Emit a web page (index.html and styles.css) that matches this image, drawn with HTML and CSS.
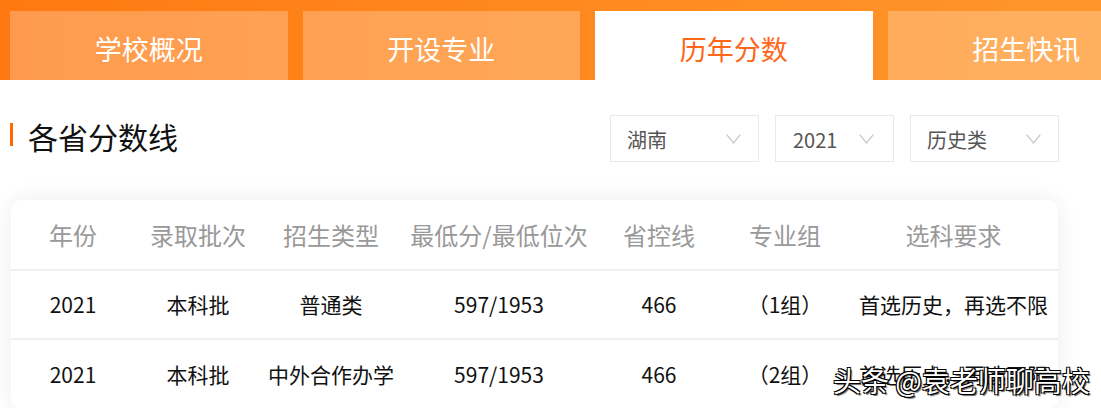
FILE: index.html
```html
<!DOCTYPE html>
<html lang="zh-CN">
<head>
<meta charset="utf-8">
<title>历年分数</title>
<link rel="stylesheet" href="styles.css">
</head>
<body>
<div class="page">
  <nav class="tabs">
    <div class="tab">学校概况</div>
    <div class="tab">开设专业</div>
    <div class="tab active">历年分数</div>
    <div class="tab">招生快讯</div>
  </nav>

  <section class="toolbar">
    <h2 class="title"><span class="bar"></span><span class="title-text">各省分数线</span></h2>
    <div class="filters">
      <div class="select wide"><span>湖南</span><svg class="chev" width="15" height="10" viewBox="0 0 15 10"><polyline points="0.7,0.7 7.5,9 14.3,0.7" fill="none" stroke="#c6c6c6" stroke-width="1.2"/></svg></div>
      <div class="select narrow"><span>2021</span><svg class="chev" width="15" height="10" viewBox="0 0 15 10"><polyline points="0.7,0.7 7.5,9 14.3,0.7" fill="none" stroke="#c6c6c6" stroke-width="1.2"/></svg></div>
      <div class="select wide"><span>历史类</span><svg class="chev" width="15" height="10" viewBox="0 0 15 10"><polyline points="0.7,0.7 7.5,9 14.3,0.7" fill="none" stroke="#c6c6c6" stroke-width="1.2"/></svg></div>
    </div>
  </section>

  <div class="card">
    <div class="row head">
      <div>年份</div><div>录取批次</div><div>招生类型</div><div>最低分/最低位次</div><div>省控线</div><div>专业组</div><div>选科要求</div>
    </div>
    <div class="row">
      <div>2021</div><div>本科批</div><div>普通类</div><div>597/1953</div><div>466</div><div>（1组）</div><div>首选历史，再选不限</div>
    </div>
    <div class="row">
      <div>2021</div><div>本科批</div><div>中外合作办学</div><div>597/1953</div><div>466</div><div>（2组）</div><div>首选历史，再选不限</div>
    </div>
  </div>

  <div class="watermark">头条 @袁老师聊高校</div>
</div>
</body>
</html>
```

FILE: styles.css
```css
* { box-sizing: border-box; }
html, body {
  margin: 0;
  padding: 0;
  background: #fff;
}
body {
  width: 1101px;
  height: 408px;
  overflow: hidden;
  font-family: "Noto Sans CJK SC", "Noto Sans", sans-serif;
}
.page {
  position: relative;
  width: 1101px;
  height: 408px;
  overflow: hidden;
}

/* tabs */
.tabs {
  display: flex;
  gap: 15px;
  height: 80px;
  padding: 11px 0 0 10px;
  background: linear-gradient(90deg, #ff7912 0%, #ff8a20 55%, #ff962a 100%);
  overflow: hidden;
}
.tab {
  flex: 0 0 277.5px;
  height: 69px;
  display: flex;
  align-items: center;
  justify-content: center;
  padding-top: 6px;
  background: rgba(255, 255, 255, 0.25);
  color: #fff;
  font-size: 27px;
  line-height: 1;
}
.tab.active {
  background: #fff;
  color: #ff661a;
}

/* toolbar */
.toolbar {
  display: flex;
  align-items: center;
  justify-content: space-between;
  padding: 35px 42px 0 10px;
}
.title {
  display: flex;
  align-items: center;
  margin: 0 0 5px 0;
  font-weight: normal;
  font-size: 30px;
  line-height: 1;
  color: #111;
}
.bar {
  width: 3px;
  height: 23px;
  background: #ff6a00;
  margin: 0 15px 4px 0;
}
.filters {
  display: flex;
  gap: 16px;
}
.select {
  height: 47px;
  border: 1px solid #e9e9e9;
  display: flex;
  align-items: center;
  justify-content: space-between;
  padding: 3px 17px 0 16px;
  font-size: 20px;
  color: #555;
  line-height: 1;
}
.select.wide { width: 149px; }
.select.narrow { width: 119px; padding-left: 17px; padding-right: 19px; }
.chev { display: block; margin-top: -2px; }

/* card / table */
.card {
  width: 1047px;
  margin: 38px 0 0 11px;
  background: #fff;
  border-radius: 10px;
  box-shadow: 0 0 22px rgba(0, 0, 0, 0.08);
  overflow: hidden;
}
.row {
  display: grid;
  grid-template-columns: 124px 126px 140px 196px 124px 128px 209px;
  height: 69px;
  border-bottom: 2px solid #efefef;
  align-items: center;
  text-align: center;
  font-size: 21px;
  color: #111;
  line-height: 1;
}
.row:last-child { border-bottom: none; }
.row.head {
  height: 71px;
  font-size: 24px;
  color: #999;
}

/* watermark overlay */
.watermark {
  position: absolute;
  left: 833px;
  top: 366px;
  font-size: 28px;
  line-height: 1;
  color: #fff;
  white-space: nowrap;
  text-shadow:
    1px 1px 0 #000,
    -1px -1px 0 #000,
    1px -1px 0 #000,
    -1px 1px 0 #000,
    2px 2px 1px rgba(0,0,0,0.6);
}
```
